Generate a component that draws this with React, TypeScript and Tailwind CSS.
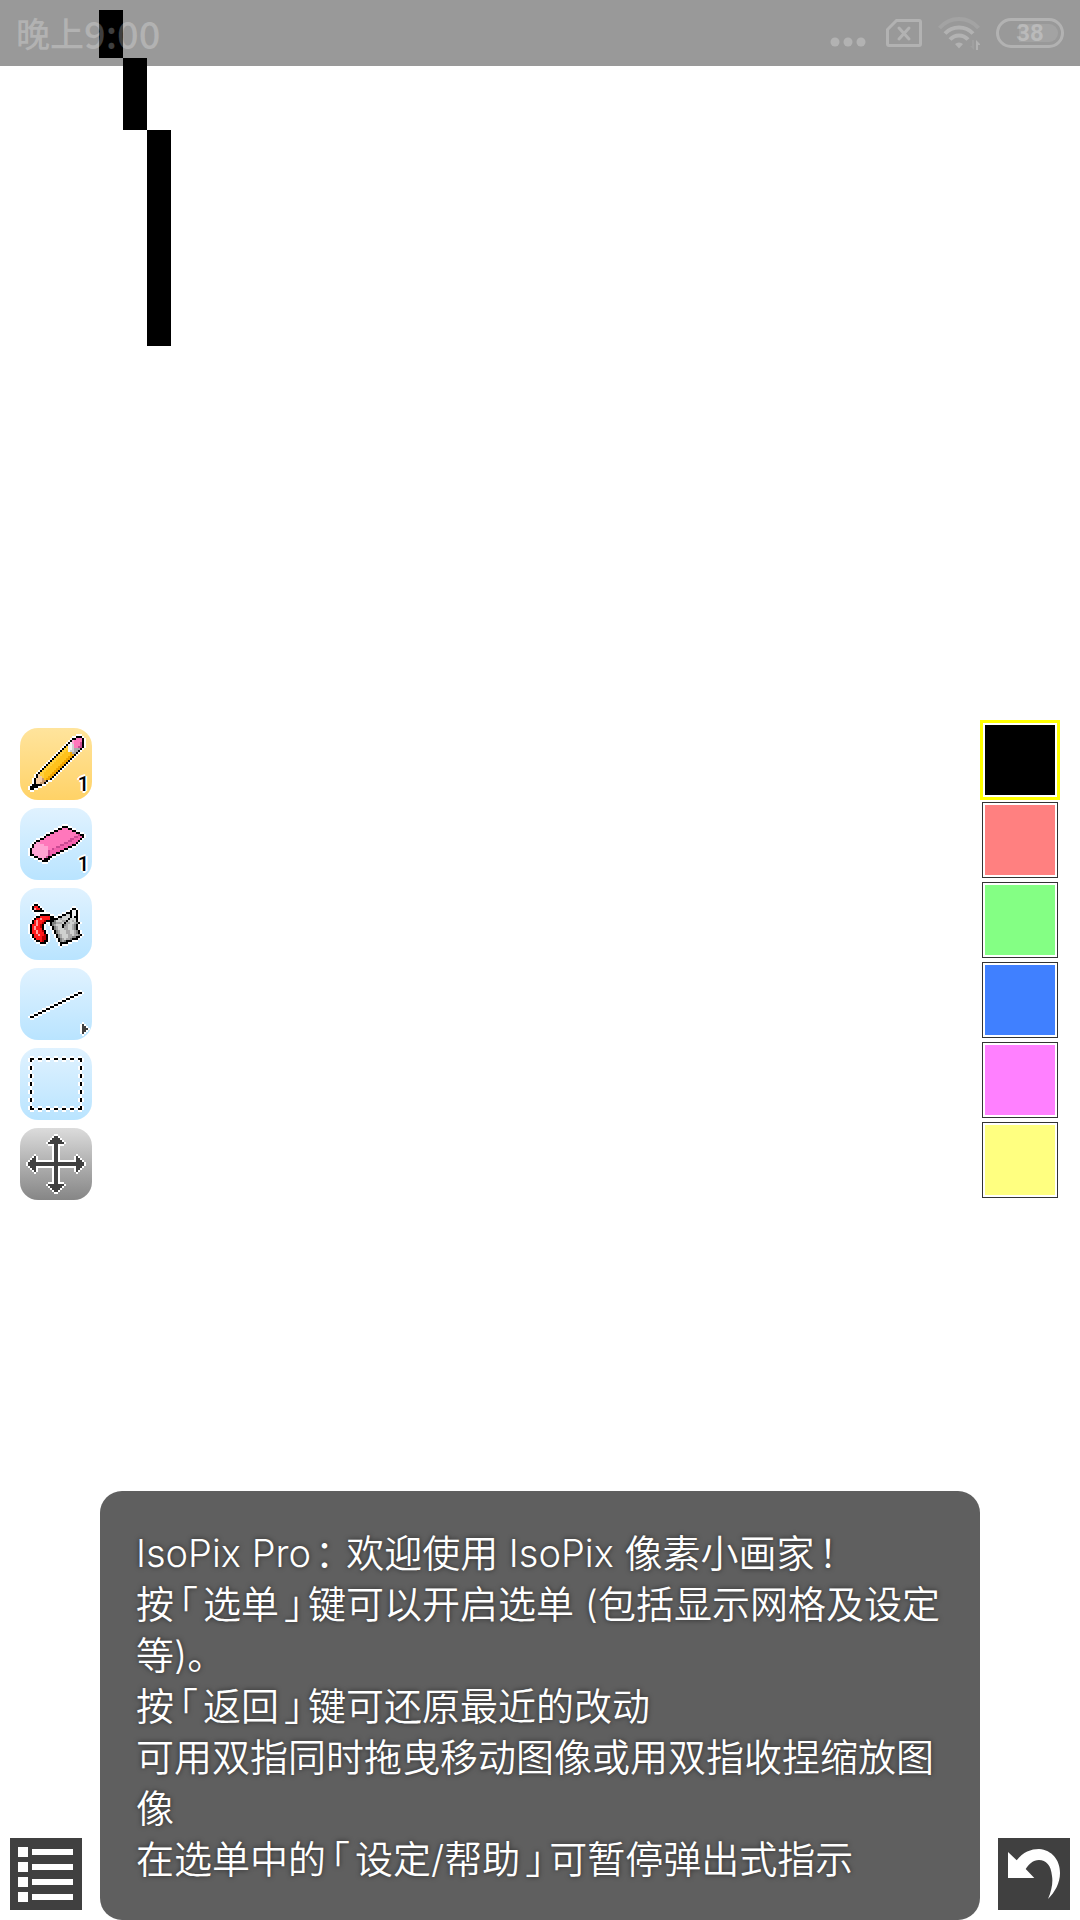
import type { ReactNode } from "react";

/* Pixel sprites: every row is "y x runs", a run being a colour key and a length. */
const PALETTE: Record<string, string> = {
  K: "#000000",
  W: "#f4f4f4",
  P: "#ff77bb",
  D: "#c94a92",
  Q: "#f562ae",
  L: "#ffa3d2",
  Y: "#ffc31c",
  y: "#ffcf3a",
  O: "#f0a400",
  T: "#f5cda2",
  t: "#c8976b",
  G: "#a9a9a9",
  g: "#cfd1cf",
  S: "#7d7f7d",
  R: "#ff1a1a",
  r: "#ff9c9c",
  M: "#b80000",
  E: "#404040",
};

type Cell = { x: number; y: number; c: string };

function parse(rows: string[]): Cell[] {
  const cells: Cell[] = [];
  rows.forEach((row) => {
    const [ys, xs, runs] = row.split(" ");
    let x = Number(xs);
    for (const m of runs.matchAll(/([A-Za-z])(\d+)/g)) {
      for (let i = 0; i < Number(m[2]); i++) cells.push({ x: x++, y: Number(ys), c: PALETTE[m[1]] });
    }
  });
  return cells;
}

function Sprite({ rows }: { rows: string[] }) {
  const cells = parse(rows);
  return (
    <svg viewBox="0 0 36 36" className="size-full" shapeRendering="crispEdges" aria-hidden="true">
      <path
        fill="#fff"
        d={cells.map(({ x, y }) => `M${x - 1} ${y}h3v1h-3zM${x} ${y - 1}h1v3h-1z`).join("")}
      />
      {cells.map(({ x, y, c }, i) => (
        <rect key={i} x={x} y={y} width="1" height="1" fill={c} />
      ))}
    </svg>
  );
}

const PENCIL = [
  "4 28 K3", "5 26 K2P3K1", "6 25 K1L1P4K1", "7 24 K1W1L1P3D1K1", "8 23 K1W2g1P3D1K1", "9 22 K1y1W2g1P2D2K1",
  "10 21 K1y2W2g1G3K1", "11 20 K1y2Y1W1g2G2K1", "12 19 K1y2Y3O1G2K1",
  ...Array.from({ length: 10 }, (_, i) => `${13 + i} ${18 - i} K1y2Y4O2K1`),
  "23 8 K1T1y2Y3O2K1", "24 8 K1T2y1Y2O2K1", "25 7 K1T3t1Y1O2K1", "26 7 K1T3t2K1", "27 7 K1T2t2K1",
  "28 6 K5", "29 5 K4", "30 5 K2",
];
const ERASER = [
  "9 21 K3", "10 19 K2P3K2", "11 17 K2P7K2", "12 15 K2P11K2", "13 13 K2P14D1K2", "14 12 K1P14D2Q2K1",
  "15 10 K2P13D2Q3K1", "16 8 K2P14D2Q3K1", "17 7 K1L2P12D2Q4K1", "18 6 K1L5P8D2Q4K2", "19 6 K1L7P4D2Q4K2",
  "20 5 K1L8P2D1Q5K2", "21 5 K1L8D1Q5K2", "22 5 K1L8D1Q3K2", "23 5 K2L7D1Q1K2", "24 7 K2L4D1K2",
  "25 9 K2L1K3", "26 11 K3",
];
const BUCKET = [
  "8 7 K2", "9 6 K1R2K1", "10 6 K1r1R2K1", "11 7 K5",
  "10 26 K2", "11 25 K1W2K1", "12 23 K3W2K1", "13 10 K5", "13 21 K2g2K1W2K1",
  "14 8 K2R5K2", "14 19 K2g4K1W1K2", "15 7 K1R2r1R4K2", "15 17 K2g1G1g3K1g3K1",
  "16 6 K1R1r1R3M1K2", "16 15 K2S1g3G2K1g2G1g1K1", "17 6 K1R1r1R2M1K1", "17 15 K1S2G3g1K1G2g2G1S1K1",
  "18 5 K1R2r1R1M1K1", "18 15 K1S1G1g3K1S1G1g2G1S1K1", "19 5 K1R1r1R2M1K1", "19 16 K1S1G1g2K1G2g2G1S1K1",
  "20 5 K1R1r1R3K1", "20 16 K1S1G1g3G2g2G1S1K1", "21 5 K1R2r1R2M1K1", "21 17 K1S1G1g3G2g2G1S1K1",
  "22 5 K1R2r1R3K1", "22 17 K1S1G1g3G2g2G1S1K1", "23 6 K1R2r1R2M1K1", "23 18 K1S1G1g3G2g1G2S1K1",
  "24 6 K1R4M2K1", "24 18 K1S1G1g3G2S2K2", "25 7 K1R3M2K1", "25 19 K1S1G1g1G2S1K3",
  "26 8 K2R1M1K2", "26 19 K1S1G1S1K3", "27 10 K3", "27 20 K4", "28 20 K1",
];
const LINE = [
  ...Array.from({ length: 13 }, (_, i) => `${12 + i} ${29 - 2 * i} K2`),
  "28 31 E1", "29 31 E2", "30 31 E3", "31 31 E2", "32 31 E1",
];
const DASHES = [5, 9, 13, 17, 21, 25, 29];
const SELECT = DASHES.flatMap((p) => [
  `5 ${p} K2`, `30 ${p} K2`, `${p} 5 K1`, `${p + 1} 5 K1`, `${p} 30 K1`, `${p + 1} 30 K1`,
]);
const MOVE = [
  "4 17 E2", "5 16 E4", "6 15 E6", "7 14 E8",
  ...Array.from({ length: 20 }, (_, i) => `${8 + i} 17 E2`),
  "28 14 E8", "29 15 E6", "30 16 E4", "31 17 E2",
  "14 7 E1", "14 28 E1", "15 6 E2", "15 28 E2", "16 5 E3", "16 28 E3",
  "17 4 E28", "18 4 E28", "19 5 E3", "19 28 E3", "20 6 E2", "20 28 E2", "21 7 E1", "21 28 E1",
];

const BLUE = "from-[#e0f2ff] to-[#b9e4ff]";
const TOOLS = [
  { name: "铅笔", rows: PENCIL, tone: "from-[#ffe49c] to-[#ffd266]", size: "1" },
  { name: "橡皮擦", rows: ERASER, tone: BLUE, size: "1" },
  { name: "填充", rows: BUCKET, tone: BLUE },
  { name: "直线", rows: LINE, tone: BLUE },
  { name: "选取", rows: SELECT, tone: BLUE },
  { name: "移动", rows: MOVE, tone: "from-[#dcdcdc] to-[#868686]" },
];

const SWATCHES = [
  { name: "黑色", fill: "bg-black" },
  { name: "红色", fill: "bg-[#ff8080]" },
  { name: "绿色", fill: "bg-[#84ff84]" },
  { name: "蓝色", fill: "bg-[#4080ff]" },
  { name: "紫色", fill: "bg-[#ff80ff]" },
  { name: "黄色", fill: "bg-[#ffff80]" },
];

/* Half-width corner bracket with even space on both sides. */
function Bracket({ children }: { children: ReactNode }) {
  return <span className="mx-[5px] [font-feature-settings:'halt']">{children}</span>;
}

/* Half-width punctuation that hugs the preceding character. */
function Mark({ children }: { children: ReactNode }) {
  return <span className="ml-1 mr-3 [font-feature-settings:'halt']">{children}</span>;
}

function StatusBar() {
  return (
    <header className="z-10 col-start-1 row-start-1 flex h-[66px] items-center justify-between self-start bg-black/40 px-4 text-white/25">
      <div className="flex items-center font-['Noto_Sans_CJK_SC',sans-serif] text-[34px] font-medium leading-[66px]">
        晚上<span className="text-[38px]">9:00</span>
      </div>
      <div className="flex items-center gap-4">
        <svg viewBox="0 0 36 30" className="h-[30px] w-9" fill="currentColor" aria-hidden="true">
          <circle cx="5" cy="24" r="4.5" />
          <circle cx="18" cy="24" r="4.5" />
          <circle cx="31" cy="24" r="4.5" />
        </svg>
        <svg viewBox="0 0 36 30" className="ml-1 h-[30px] w-9" fill="none" stroke="currentColor" strokeWidth="3" aria-hidden="true">
          <path d="M10.500 2.500H33a1.500 1.500 0 0 1 1.500 1.500V26a1.500 1.500 0 0 1-1.500 1.500H3A1.500 1.500 0 0 1 1.500 26V11.500Z" />
          <path d="M13 10l10 11M23 10L13 21" strokeLinecap="round" />
        </svg>
        <svg viewBox="0 0 42 34" className="h-[34px] w-[42px]" fill="none" stroke="currentColor" strokeWidth="4" aria-hidden="true">
          <path d="M1.500 12C12 0 30 0 40.500 12" opacity=".4" />
          <path d="M7 17.500C14.500 9.500 27.500 9.500 35 17.500" />
          <path d="M12 23.500C17 18 25 18 30 23.500" />
          <path d="M17 28a6 6 0 0 1 8 0l-4 4.500Z" fill="currentColor" stroke="none" />
          <path d="M38 34V24l5 5h-3v5z" fill="currentColor" stroke="none" />
          <path d="M36 24v10l-4-4h2v-6z" fill="currentColor" stroke="none" opacity=".3" />
        </svg>
        <div className="relative flex h-[30px] w-[68px] items-center justify-center rounded-full border-3 border-white/25">
          <span className="absolute inset-y-[3px] left-5 right-[3px] rounded-r-full bg-white/10" />
          <span className="font-['Roboto',sans-serif] text-2xl font-bold leading-6">38</span>
        </div>
      </div>
    </header>
  );
}

export default function App() {
  return (
    <div className="relative grid min-h-screen grid-cols-1 grid-rows-1 overflow-hidden bg-white">
      <svg className="absolute inset-0 size-full" shapeRendering="crispEdges" role="img" aria-label="画布">
        <path d="M99 10h24v48h24v72h24v216h-24v-216h-24v-72h-24z" />
      </svg>

      <StatusBar />

      <main className="relative col-start-1 row-start-1 flex items-center justify-between self-center px-5">
        <nav aria-label="工具" className="flex flex-col gap-2 pt-2">
          {TOOLS.map((t) => (
            <button
              key={t.name}
              type="button"
              aria-label={t.name}
              className={`relative size-[72px] overflow-hidden rounded-[18px] bg-linear-to-b ${t.tone}`}
            >
              <Sprite rows={t.rows} />
              {t.size && (
                <span className="absolute bottom-[6px] right-[3px] font-['Roboto',sans-serif] text-xl font-medium leading-5 text-black [text-shadow:2px_0_#fff,-2px_0_#fff,0_2px_#fff,0_-2px_#fff,1px_1px_#fff,-1px_-1px_#fff]">
                  {t.size}
                </span>
              )}
            </button>
          ))}
        </nav>
        <div aria-label="颜色" role="group" className="flex flex-col">
          {SWATCHES.map((s, i) => (
            <button
              key={s.name}
              type="button"
              aria-label={s.name}
              className={i === 0 ? "size-20 border-3 border-[#ffff00] p-[2px]" : "size-20 p-[2px]"}
            >
              <span className={i === 0 ? "block size-full" : "block size-full border border-[#333] p-[2px]"}>
                <span className={`block size-full ${s.fill}`} />
              </span>
            </button>
          ))}
        </div>
      </main>

      <footer className="relative col-start-1 row-start-1 flex items-end justify-between gap-[18px] self-end px-[10px]">
        <button type="button" aria-label="选单" className="mb-[10px] size-[72px] shrink-0 bg-[#404040]">
          <svg viewBox="0 0 72 72" className="size-full" fill="#fff" aria-hidden="true">
            {[9, 24, 39, 54].map((y) => (
              <g key={y}>
                <rect x="8" y={y} width="10" height="10" />
                <rect x="22" y={y + 2} width="41" height="6" />
              </g>
            ))}
          </svg>
        </button>
        <section
          role="status"
          className="min-w-0 flex-1 rounded-[22px] bg-[#5f5f5f] px-9 pb-[35px] pt-[37px] font-['Inter','Noto_Sans_CJK_SC',sans-serif] text-[38px] font-[350] leading-[51px] text-white [text-shadow:0_0_5px_rgba(0,0,0,0.6)]"
        >
          <p>IsoPix Pro<Mark>：</Mark>欢迎使用 IsoPix 像素小画家<Mark>！</Mark></p>
          <p>按<Bracket>「</Bracket>选单<Bracket>」</Bracket>键可以开启选单 (包括显示网格及设定等)。</p>
          <p>按<Bracket>「</Bracket>返回<Bracket>」</Bracket>键可还原最近的改动</p>
          <p>可用双指同时拖曳移动图像或用双指收捏缩放图像</p>
          <p>在选单中的<Bracket>「</Bracket>设定/帮助<Bracket>」</Bracket>可暂停弹出式指示</p>
        </section>
        <button type="button" aria-label="还原" className="mb-[10px] size-[72px] shrink-0 bg-[#404040]">
          <svg viewBox="0 0 72 72" className="size-full" fill="#fff" aria-hidden="true">
            <path d="M10 14L18.700 22.300C25 14 33 11 41 11C54 12 62 22 62 35C62 45 57 54 50 61C54 52 55 44 54 38C53 27 48 22 41 22C35 22 31 26 27.700 31L36.300 40H10Z" />
          </svg>
        </button>
      </footer>
    </div>
  );
}
